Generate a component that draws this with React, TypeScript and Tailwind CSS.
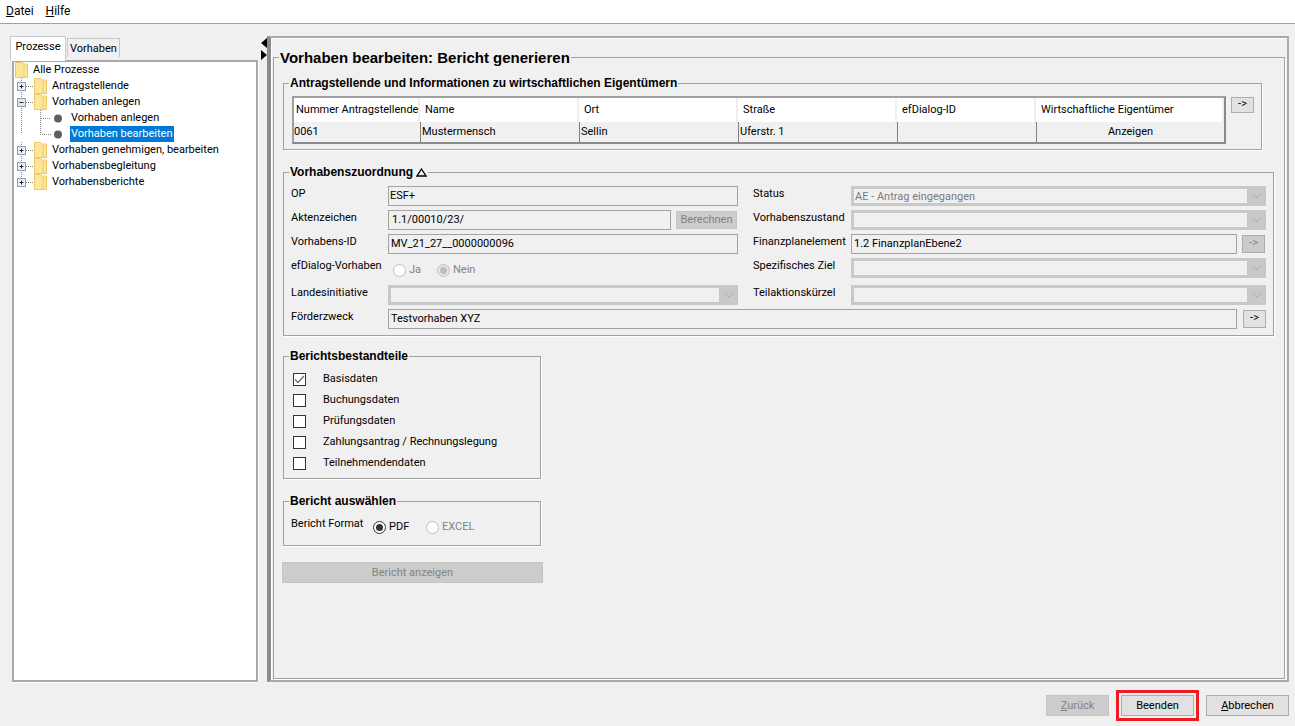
import type { ReactNode } from "react";

const fontUi = "font-['Roboto','Liberation_Sans',Arial,sans-serif]";
const fontBold = "font-['Liberation_Sans',Arial,sans-serif]";

function TreeRow({
  level,
  label,
  expander,
  trunk = true,
  last,
  selected,
}: {
  level: 0 | 1 | 2;
  label: string;
  expander?: "plus" | "minus";
  trunk?: boolean;
  last?: boolean;
  selected?: boolean;
}) {
  const width = level === 0 ? 18 : level === 1 ? 37 : 56;
  return (
    <div className="flex h-4 items-center">
      <svg width={width} height="16" viewBox={`0 0 ${width} 16`} className="shrink-0">
        {level === 0 && (
          <>
            <path d="M1.5 0.5H8L10 2H13.5V15.5H1.5Z" fill="#fde59a" stroke="#ecc86e" />
            <path d="M10 2V15" stroke="#f2cd6a" />
          </>
        )}
        {level > 0 && trunk && (
          <path d={last ? "M7.5 0V8" : "M7.5 0V16"} stroke="#8a8a8a" strokeDasharray="1 1" />
        )}
        {level === 1 && (
          <>
            <path d="M12 8.5H19" stroke="#8a8a8a" strokeDasharray="1 1" />
            <rect x="3.5" y="4.5" width="8" height="8" fill={expander === "minus" ? "#e4e4e4" : "#eef1f7"} stroke="#8e9bb0" />
            <path d="M5.5 8.5H9.5" stroke="#1b2a44" />
            {expander === "plus" && <path d="M7.5 6.5V10.5" stroke="#1b2a44" />}
            <g transform="translate(20 0)">
              <path d="M0.5 0.5H6.5L8.5 2H12.5V15.5H0.5Z" fill="#fde59a" stroke="#ecc86e" />
              <path d="M9 2V15" stroke="#f2cd6a" />
            </g>
          </>
        )}
        {level === 2 && (
          <>
            <path d={last ? "M26.5 0V8.5H37" : "M26.5 0V16M27 8.5H37"} stroke="#8a8a8a" strokeDasharray="1 1" fill="none" />
            <circle cx="44" cy="8.5" r="4" fill="#5f5f5f" />
          </>
        )}
      </svg>
      <span className={selected ? "h-4 bg-[#0078d7] px-px leading-4 text-white" : "px-px leading-4 text-black"}>{label}</span>
    </div>
  );
}

function Box({ title, className, bodyClass, children }: { title: ReactNode; className: string; bodyClass: string; children: ReactNode }) {
  return (
    <fieldset className={`border border-[#a0a0a0] shadow-[1px_1px_0_#ffffff] ${className}`}>
      <legend className={`ml-[5px] px-px text-xs leading-[14px] font-bold text-black ${fontBold}`}>{title}</legend>
      <div className={bodyClass}>{children}</div>
    </fieldset>
  );
}

function TextInput({ value, className }: { value?: string; className?: string }) {
  return (
    <div className={`flex h-5 items-center border border-[#a3a3a3] px-[2px] pt-px text-black ${className ?? ""}`}>{value}</div>
  );
}

function Select({ value }: { value?: string }) {
  return (
    <div className="flex h-5 w-full items-stretch border-[3px] border-r-0 border-[#c8c8c8] bg-[#f0f0f0]">
      <div className="flex-1 px-px leading-4 text-[#7b7b7b]">{value}</div>
      <div className="flex w-[19px] items-center justify-center bg-[#c8c8c8]">
        <svg width="10" height="6" viewBox="0 0 10 6">
          <path d="M1 1L5 5L9 1" fill="none" stroke="#b0b0b0" />
        </svg>
      </div>
    </div>
  );
}

function ArrowButton({ disabled, className }: { disabled?: boolean; className?: string }) {
  return (
    <div
      className={`flex h-[18px] w-[23px] items-center justify-center border border-[#adadad] pb-[2px] ${
        disabled ? "bg-[#cccccc] text-[#838383]" : "bg-[#e1e1e1] text-black"
      } ${className ?? ""}`}
    >
      {"->"}
    </div>
  );
}

function Radio({ label, checked, disabled, width }: { label: string; checked?: boolean; disabled?: boolean; width: string }) {
  return (
    <div className={`flex items-center gap-[3px] ${width}`}>
      <span
        className={`flex size-[13px] items-center justify-center rounded-full border ${
          disabled ? "border-[#bfbfbf]" : "border-[#333333]"
        } ${disabled && checked ? "bg-[#e6e6e6]" : "bg-white"}`}
      >
        {checked && <span className={`size-[7px] rounded-full ${disabled ? "bg-[#bdbdbd]" : "bg-[#333333]"}`} />}
      </span>
      <span className={disabled ? "text-[#838383]" : "text-black"}>{label}</span>
    </div>
  );
}

function CheckRow({ label, checked }: { label: string; checked?: boolean }) {
  return (
    <div className="flex h-[21px] items-center">
      <span className="flex size-[13px] items-center justify-center border border-[#333333] bg-white">
        {checked && (
          <svg width="11" height="9" viewBox="0 0 11 9">
            <path d="M1 4.5L4 7.5L10 1" fill="none" stroke="#707070" strokeWidth="1.4" />
          </svg>
        )}
      </span>
      <span className="ml-[17px] text-black">{label}</span>
    </div>
  );
}

function FormLabel({ children }: { children: ReactNode }) {
  return <span className="whitespace-nowrap text-black">{children}</span>;
}

const columns = [
  { title: "Nummer Antragstellende", value: "0061", width: "w-[126px]" },
  { title: "Name", value: "Mustermensch", width: "w-[159px]" },
  { title: "Ort", value: "Sellin", width: "w-[159px]" },
  { title: "Straße", value: "Uferstr. 1", width: "w-[159px]" },
  { title: "efDialog-ID", value: "", width: "w-[139px]" },
  { title: "Wirtschaftliche Eigentümer", value: "Anzeigen", width: "w-[188px]" },
];

export default function App() {
  return (
    <div className={`flex h-[726px] w-[1295px] flex-col overflow-hidden bg-[#f0f0f0] text-[11px] ${fontUi}`}>
      <div className="flex h-6 shrink-0 items-center gap-3 border-b border-[#a0a0a0] bg-white pb-px pl-[6px] text-xs text-black">
        <span>
          <span className="underline">D</span>atei
        </span>
        <span>
          <span className="underline">H</span>ilfe
        </span>
      </div>

      <div className="flex h-[659px] shrink-0">
        {/* linke Spalte */}
        <div className="flex w-[260px] shrink-0 flex-col pt-3 pl-[10px]">
          <div className="flex h-6 items-end">
            <div className="z-10 -mb-px flex h-[25px] w-[56px] justify-center border border-b-0 border-[#c8c8c8] bg-white pt-[2px] text-black">Prozesse</div>
            <div className="mb-[3px] ml-px flex h-[19px] w-[53px] justify-center border border-b-0 border-[#c8c8c8] bg-[#f0f0f0] pt-[2px] text-black">Vorhaben</div>
          </div>
          <div className="ml-[2px] h-[622px] w-[246px] border-2 border-[#a9a9a9] bg-white shadow-[1px_1px_0_#ffffff]">
            <TreeRow level={0} label="Alle Prozesse" />
            <TreeRow level={1} label="Antragstellende" expander="plus" />
            <TreeRow level={1} label="Vorhaben anlegen" expander="minus" />
            <TreeRow level={2} label="Vorhaben anlegen" />
            <TreeRow level={2} label="Vorhaben bearbeiten" last selected />
            <TreeRow level={1} label="Vorhaben genehmigen, bearbeiten" expander="plus" />
            <TreeRow level={1} label="Vorhabensbegleitung" expander="plus" />
            <TreeRow level={1} label="Vorhabensberichte" expander="plus" last />
          </div>
        </div>

        {/* Teiler */}
        <div className="flex w-[7px] shrink-0 flex-col pt-3">
          <svg width="7" height="26" viewBox="0 0 7 26">
            <path d="M7 2V12L1 7Z M1 14V24L7 19Z" fill="#000000" />
          </svg>
        </div>

        {/* rechte Spalte */}
        <div className="mt-3 mb-[1px] flex h-[646px] w-[1022px] shrink-0 border-2 border-l-4 border-[#a9a9a9] border-l-[#8a8a8a] px-[2px] shadow-[inset_1px_1px_0_#ffffff]">
          <fieldset className="mt-[11px] mb-px w-full border border-[#a0a0a0] shadow-[1px_1px_0_#ffffff]">
            <legend className={`ml-[5px] px-px text-[15px] leading-[17px] font-bold text-black ${fontBold}`}>
              Vorhaben bearbeiten: Bericht generieren
            </legend>

            <div className="pl-[9px]">
              <div className="mt-[10px] w-[979px]">
                <Box title="Antragstellende und Informationen zu wirtschaftlichen Eigentümern" className="h-[74px]" bodyClass="pt-[6px] pl-2">
                  <div className="flex items-start gap-[5px]">
                    <div className="flex w-[934px] border-2 border-[#8a8a8a] border-t-[#a0a0a0] border-l-[#a0a0a0]">
                      {columns.map((col, i) => (
                        <div key={col.title} className={`${col.width} shrink-0`}>
                          <div
                            className={`flex h-[24px] items-center border-r-2 border-[#efefef] bg-white pt-px whitespace-nowrap text-black ${
                              i === 0 ? "pl-[2px]" : "pl-[5px]"
                            }`}
                          >
                            {col.title}
                          </div>
                          <div
                            className={`flex h-5 items-center text-black ${i > 0 ? "border-l border-[#808080]" : ""} ${
                              i === 5 ? "justify-center" : i === 0 ? "" : "pl-px"
                            }`}
                          >
                            {col.value}
                          </div>
                        </div>
                      ))}
                    </div>
                    <ArrowButton className="mt-px !h-4" />
                  </div>
                </Box>
              </div>

              <div className="mt-[15px] w-[991px]">
                <Box
                  title={
                    <span className="flex items-center gap-[3px]">
                      Vorhabenszuordnung
                      <svg width="11" height="9" viewBox="0 0 11 9">
                        <path d="M5.5 1L10 8H1Z" fill="none" stroke="#000000" strokeWidth="1.3" />
                      </svg>
                    </span>
                  }
                  className="h-[171px]"
                  bodyClass="pt-[7px] pl-[7px]"
                >
                  <div className="grid grid-cols-[97px_350px_15px_98px_415px] [grid-auto-rows:24px]">
                    <FormLabel>OP</FormLabel>
                    <TextInput value="ESF+" className="pl-[1px]" />
                    <span />
                    <FormLabel>Status</FormLabel>
                    <Select value="AE - Antrag eingegangen" />

                    <FormLabel>Aktenzeichen</FormLabel>
                    <div className="flex gap-[5px]">
                      <TextInput value="1.1/00010/23/" className="w-[283px] pl-[3px]" />
                      <div className="mt-px flex h-[18px] w-[61px] items-center justify-center border border-[#c4c4c4] bg-[#cccccc] pt-px text-[#838383]">
                        Berechnen
                      </div>
                    </div>
                    <span />
                    <FormLabel>Vorhabenszustand</FormLabel>
                    <Select />

                    <FormLabel>Vorhabens-ID</FormLabel>
                    <TextInput value="MV_21_27__0000000096" />
                    <span />
                    <FormLabel>Finanzplanelement</FormLabel>
                    <div className="flex gap-[5px]">
                      <TextInput value="1.2 FinanzplanEbene2" className="w-[386px]" />
                      <ArrowButton disabled className="mt-px" />
                    </div>
                  </div>

                  <div className="grid h-[27px] grid-cols-[97px_350px_15px_98px_415px]">
                    <FormLabel>efDialog-Vorhaben</FormLabel>
                    <div className="flex h-5 items-center pt-1 pl-[5px]">
                      <Radio label="Ja" disabled width="w-[44px]" />
                      <Radio label="Nein" checked disabled width="w-[44px]" />
                    </div>
                    <span />
                    <FormLabel>Spezifisches Ziel</FormLabel>
                    <Select />
                  </div>

                  <div className="grid h-6 grid-cols-[97px_350px_15px_98px_415px]">
                    <FormLabel>Landesinitiative</FormLabel>
                    <Select />
                    <span />
                    <FormLabel>Teilaktionskürzel</FormLabel>
                    <Select />
                  </div>

                  <div className="grid grid-cols-[97px_849px_6px_23px]">
                    <FormLabel>Förderzweck</FormLabel>
                    <TextInput value="Testvorhaben XYZ" />
                    <span />
                    <ArrowButton className="mt-px" />
                  </div>
                </Box>
              </div>

              <div className="mt-[13px] flex w-[258px] flex-col">
                <Box title="Berichtsbestandteile" className="h-[130px]" bodyClass="pt-[6px] pl-[9px]">
                  <CheckRow label="Basisdaten" checked />
                  <CheckRow label="Buchungsdaten" />
                  <CheckRow label="Prüfungsdaten" />
                  <CheckRow label="Zahlungsantrag / Rechnungslegung" />
                  <CheckRow label="Teilnehmendendaten" />
                </Box>

                <Box title="Bericht auswählen" className="mt-[15px] h-[52px]" bodyClass="pt-2 pl-[7px]">
                  <div className="flex items-start">
                    <span className="w-[82px] text-black">Bericht Format</span>
                    <div className="mt-[3px] flex items-center">
                      <Radio label="PDF" checked width="w-[53px]" />
                      <Radio label="EXCEL" disabled width="w-[53px]" />
                    </div>
                  </div>
                </Box>

                <div className="mt-[16px] -ml-px flex h-[21px] w-[261px] items-center justify-center border border-[#c4c4c4] bg-[#cccccc] pt-px text-[#838383]">
                  Bericht anzeigen
                </div>
              </div>
            </div>
          </fieldset>
        </div>
      </div>

      {/* Fußleiste */}
      <div className="flex flex-1 items-center justify-end pt-[2px] pr-[6px]">
        <div className="flex h-[21px] w-[63px] items-center justify-center border border-[#c4c4c4] bg-[#cccccc] pt-px text-[#838383]">
          <span>
            <span className="underline">Z</span>urück
          </span>
        </div>
        <div className="mr-[7px] ml-[7px] border-[3px] border-[#ed1c24] p-[2px]">
          <div className="flex h-[21px] w-[73px] items-center justify-center border border-[#adadad] bg-[#e1e1e1] pt-px text-black">
            Beenden
          </div>
        </div>
        <div className="flex h-[21px] w-[83px] items-center justify-center border border-[#adadad] bg-[#e1e1e1] pt-px text-black">
          <span>
            <span className="underline">A</span>bbrechen
          </span>
        </div>
      </div>
    </div>
  );
}
